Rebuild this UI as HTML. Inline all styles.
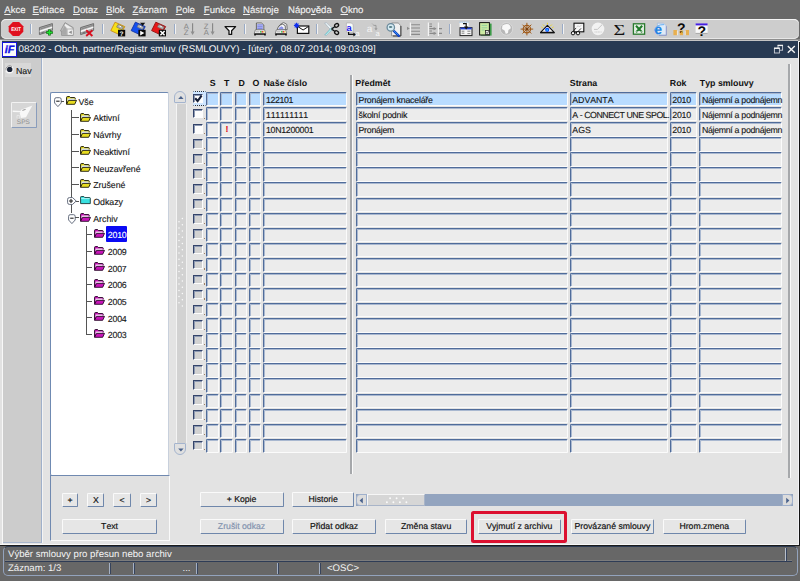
<!DOCTYPE html>
<html lang="cs"><head><meta charset="utf-8"><title>08202 - Obch. partner/Registr smluv</title>
<style>
html,body{margin:0;padding:0;}
body{font-kerning:none;text-rendering:geometricPrecision;width:800px;height:581px;position:relative;overflow:hidden;background:#e3e3e3;font-family:"Liberation Sans",Arial,sans-serif;color:#111;}
.a{position:absolute;}
.t{position:absolute;white-space:nowrap;line-height:1;}
#menu{left:0;top:0;width:800px;height:41px;background:#686868;}
.mi{position:absolute;top:5.9px;font-size:9.6px;-webkit-text-stroke:0.12px currentColor;color:#f2f2f2;white-space:nowrap;line-height:1;}
.mi u{text-decoration:underline;text-underline-offset:1px;}
#tb{left:1px;top:19px;width:797.5px;height:19.5px;background:#cdcdcd;border-radius:5px;box-shadow:inset 0 1px 0 #f4f4f4, inset 0 -1px 0 #e6e6e6;}
.sep{position:absolute;top:23.8px;width:1px;height:10.4px;background:#9aabc6;box-shadow:1px 0 0 #f2f2f2;}
#title{left:1.5px;top:41px;width:796.3px;height:16.6px;background:#283a53;}
#title .tx{left:17px;top:3.6px;font-size:9.75px;color:#f4f4f4;}
#nav{left:3.4px;top:57.7px;width:37.4px;height:484.3px;background:#cccccc;border-right:1px solid #9fb0ca;border-bottom:1px solid #a8b6cc;box-shadow:1px 0 0 #f4f4f4;}
.cell{position:absolute;height:12.4px;background:#ececec;border-top:1px solid #506c9a;border-left:1px solid #506c9a;border-right:1px solid #fbfbfb;border-bottom:1px solid #fbfbfb;box-sizing:content-box;border-radius:1.5px;box-shadow:inset 1px 1px 0 #a9b8d0;}
.cell.sel{background:#b9dcff;}
.ct{position:absolute;font-size:8.8px;-webkit-text-stroke:0.12px currentColor;line-height:1;white-space:nowrap;color:#151515;}
.hd{position:absolute;top:78.6px;font-size:8.8px;font-weight:bold;line-height:1;white-space:nowrap;color:#111;}
.btn{-webkit-text-stroke:0.18px currentColor;position:absolute;height:12.4px;background:#e6e6e6;border-top:1px solid #fafafa;border-left:1px solid #fafafa;border-right:1.2px solid #6f87ab;border-bottom:1.2px solid #6f87ab;border-radius:1.5px;font-size:8.7px;line-height:13.8px;text-align:center;color:#111;white-space:nowrap;}
.cb{position:absolute;width:7.4px;height:7.6px;box-shadow:inset 1px 1px 0 #8e9ab2;border-top:1px solid #34446a;border-left:1px solid #34446a;border-right:1px solid #fdfdfd;border-bottom:1px solid #fdfdfd;background:#d2d2d2;}
.cb.w{background:#fdfdfd;}
.tr{position:absolute;font-size:8.8px;-webkit-text-stroke:0.12px currentColor;line-height:1;white-space:nowrap;color:#151515;}
#status{left:0;top:545px;width:800px;height:36px;background:#676767;}
</style></head><body>
<div id="menu" class="a">
<span class="mi" style="left:4.3px"><u>A</u>kce</span>
<span class="mi" style="left:32.5px"><u>E</u>ditace</span>
<span class="mi" style="left:73px"><u>D</u>otaz</span>
<span class="mi" style="left:106px"><u>B</u>lok</span>
<span class="mi" style="left:132.5px"><u>Z</u>áznam</span>
<span class="mi" style="left:175.75px"><u>P</u>ole</span>
<span class="mi" style="left:203.75px"><u>F</u>unkce</span>
<span class="mi" style="left:243px"><u>N</u>ástroje</span>
<span class="mi" style="left:288px">Nápo<u>v</u>ěda</span>
<span class="mi" style="left:340.5px"><u>O</u>kno</span>
</div>
<div id="tb" class="a"></div>
<div class="sep" style="left:30px"></div>
<div class="sep" style="left:102px"></div>
<div class="sep" style="left:173.75px"></div>
<div class="sep" style="left:244.4px"></div>
<div class="sep" style="left:316.25px"></div>
<div class="sep" style="left:449.4px"></div>
<div class="sep" style="left:562px"></div>
<svg class="a" style="left:0;top:18px" width="800" height="23" viewBox="0 18 800 23">
<path d="M12.9 22 L19.1 22 L23.3 26.2 L23.3 31.8 L19.1 36 L12.9 36 L8.7 31.8 L8.7 26.2 Z" fill="#e0101e"/>
<text x="16" y="30.9" font-size="5.4" font-weight="bold" fill="#fff" text-anchor="middle" font-family="Liberation Sans,Arial,sans-serif" textLength="9.6" lengthAdjust="spacingAndGlyphs">EXIT</text>
<g transform="translate(38.8,0)"><path d="M0.6 27.6 L13.6 23.6 L13.6 30.4 L0.6 34.6 Z" fill="#a9a9a9" stroke="#6e6e6e" stroke-width="1"/><path d="M0.8 30.6 L13.4 26.4 L13.4 28 L0.8 32.2 Z" fill="#f6f6f6"/><path d="M1.6 29 L12.6 25.4" stroke="#7a7a7a" stroke-width="0.8"/><path d="M2.4 33 L5.4 32" stroke="#6a6a6a" stroke-width="0.9"/></g>
<path d="M49.4 29.4 L49.4 35.6 M46.2 32.5 L52.8 32.5" stroke="#0a5a0a" stroke-width="2.6"/><path d="M49.4 29.9 L49.4 35.1 M46.7 32.5 L52.3 32.5" stroke="#20e030" stroke-width="1.5"/>
<g transform="translate(59.6,0)"><path d="M0.8 31 L5.4 22.6 L13.6 27.6 L13.6 35.4 L2 35.4 L2 31 Z" fill="#bdbdbd" stroke="#8e8e8e" stroke-width="0.8"/><path d="M5.6 23.8 L12.8 28.2 L8 28.6 L5 26 Z" fill="#efefef"/><path d="M2.4 31 L5.2 25.6 L7 29.6 L7 34.8 L2.6 34.8 Z" fill="#a8a8a8"/><rect x="8.2" y="29.6" width="5" height="5.2" fill="#f2f2f2"/><path d="M12.2 30.4 L12.2 34 L9 32.2 Z" fill="#8e8e8e"/></g>
<g transform="translate(80,0)"><path d="M0.6 27.6 L13.6 23.6 L13.6 30.4 L0.6 34.6 Z" fill="#a9a9a9" stroke="#6e6e6e" stroke-width="1"/><path d="M0.8 30.6 L13.4 26.4 L13.4 28 L0.8 32.2 Z" fill="#f6f6f6"/><path d="M1.6 29 L12.6 25.4" stroke="#7a7a7a" stroke-width="0.8"/><path d="M2.4 33 L5.4 32" stroke="#6a6a6a" stroke-width="0.9"/></g>
<path d="M86.2 30.2 L92.4 36 M92.4 30.2 L86.2 36" stroke="#d81020" stroke-width="1.9"/>
<g transform="translate(110.4,0)"><path d="M4.6 22.2 L14.4 26.6 L9.8 35 L0.4 30.6 Z" fill="#f6e018" stroke="#c88a18" stroke-width="0.9" stroke-linejoin="round"/><path d="M7.6 24.4 L13 26.9 L11.6 29.6 L6.2 27.1 Z" fill="#b0b0b0" stroke="#6a6a6a" stroke-width="0.6"/><path d="M9 26 L10.6 26.8" stroke="#fff" stroke-width="1"/><rect x="7.6" y="29.8" width="7.2" height="6.6" fill="#0a0a0a"/><text x="11.2" y="35.6" font-size="6.6" font-weight="bold" fill="#fff" text-anchor="middle" font-family="Liberation Sans,Arial,sans-serif">?</text></g>
<g transform="translate(130.8,0)"><path d="M4.6 22.2 L14.4 26.6 L9.8 35 L0.4 30.6 Z" fill="#1450f0" stroke="#1030a0" stroke-width="0.9" stroke-linejoin="round"/><path d="M7.6 24.4 L13 26.9 L11.6 29.6 L6.2 27.1 Z" fill="#b0b0b0" stroke="#6a6a6a" stroke-width="0.6"/><path d="M9 26 L10.6 26.8" stroke="#fff" stroke-width="1"/><rect x="7.6" y="29.8" width="7.2" height="6.6" fill="#0a0a0a"/><path d="M9.4 30.8 L13.6 33.1 L9.4 35.4 Z" fill="#fff"/></g>
<path d="M140 22.8 L145.2 22.8 L142.6 26 Z" fill="#111"/>
<g transform="translate(151.2,0)"><path d="M4.6 22.2 L14.4 26.6 L9.8 35 L0.4 30.6 Z" fill="#e81818" stroke="#901010" stroke-width="0.9" stroke-linejoin="round"/><path d="M7.6 24.4 L13 26.9 L11.6 29.6 L6.2 27.1 Z" fill="#b0b0b0" stroke="#6a6a6a" stroke-width="0.6"/><path d="M9 26 L10.6 26.8" stroke="#fff" stroke-width="1"/><rect x="7.6" y="29.8" width="7.2" height="6.6" fill="#0a0a0a"/><path d="M9.2 31 L13.4 35.2 M13.4 31 L9.2 35.2" stroke="#fff" stroke-width="1.5"/></g>
<text x="183.8" y="28.8" font-size="7.6" fill="#858585" font-family="Liberation Sans,Arial,sans-serif">A</text><text x="183.8" y="35" font-size="7.6" fill="#858585" font-family="Liberation Sans,Arial,sans-serif">Z</text>
<path d="M192.6 23.2 L192.6 33" stroke="#858585" stroke-width="1.1"/><path d="M190.6 31.4 L194.6 31.4 L192.6 35 Z" fill="#8e8e8e"/>
<text x="203.8" y="28.8" font-size="7.6" fill="#858585" font-family="Liberation Sans,Arial,sans-serif">Z</text><text x="203.8" y="35" font-size="7.6" fill="#858585" font-family="Liberation Sans,Arial,sans-serif">A</text>
<path d="M212.6 23.2 L212.6 33" stroke="#858585" stroke-width="1.1"/><path d="M210.6 31.4 L214.6 31.4 L212.6 35 Z" fill="#8e8e8e"/>
<path d="M225 26.6 L235.6 26.6 L231.6 30.8 L231.6 34.4 L229 34.4 L229 30.8 Z" fill="#fff" stroke="#111" stroke-width="1.3" stroke-linejoin="round"/>
<g transform="translate(253.8,0)"><path d="M2.6 30 L2.6 23 L7.6 23 L10 25 L10 30 Z" fill="#fafafa" stroke="#444" stroke-width="0.8"/><rect x="3.4" y="24.2" width="5.6" height="5" fill="#8088e4"/><path d="M3.4 25.6 L9 25.6 M3.4 27.4 L9 27.4" stroke="#c0c4f4" stroke-width="0.6"/><path d="M0.4 33.6 L1.6 29.8 L10.8 29.8 L12 33.6 Z" fill="#f2f2f2" stroke="#666" stroke-width="0.7"/><rect x="6.2" y="31.2" width="1.6" height="1.3" fill="#20c030"/><rect x="7.8" y="31.2" width="1.6" height="1.3" fill="#e02020"/><rect x="9.4" y="31.2" width="1.2" height="1.3" fill="#e8d020"/><path d="M2 31.8 L5.6 31.8" stroke="#999" stroke-width="0.7"/><path d="M0.4 33.6 L12 33.6 L12 35.4 L10.4 35.4 L10.4 34.8 L2 34.8 L2 35.4 L0.4 35.4 Z" fill="#0c0c0c"/></g>
<g transform="translate(274.8,0)"><path d="M3.4 29.6 Q3.6 24 9 22.6 L12 24.4 L12.4 29.6 Z" fill="#f4f4f4" stroke="#555" stroke-width="0.8"/><path d="M2.6 29.8 Q3 25.4 7.8 24.2 L10.4 25.6 L10.6 29.8 Z" fill="#fafafa" stroke="#444" stroke-width="0.8"/><path d="M3.6 29.4 Q4 27 6.8 26.2 L8.6 27.4 L8.6 29.4 Z" fill="#8c94e8"/><path d="M0.4 33.6 L1.6 29.8 L10.8 29.8 L12 33.6 Z" fill="#f2f2f2" stroke="#666" stroke-width="0.7"/><rect x="6.2" y="31.2" width="1.6" height="1.3" fill="#20c030"/><rect x="7.8" y="31.2" width="1.6" height="1.3" fill="#e02020"/><rect x="9.4" y="31.2" width="1.2" height="1.3" fill="#e8d020"/><path d="M2 31.8 L5.6 31.8" stroke="#999" stroke-width="0.7"/><path d="M0.4 33.6 L12 33.6 L12 35.4 L10.4 35.4 L10.4 34.8 L2 34.8 L2 35.4 L0.4 35.4 Z" fill="#0c0c0c"/></g>
<rect x="297.4" y="26" width="11.4" height="7.4" fill="#fff" stroke="#111" stroke-width="1.2"/><path d="M297.6 26.4 L303.1 30 L308.6 26.4" fill="none" stroke="#111" stroke-width="1"/>
<path d="M296.6 22.8 L296.6 28.2 M293.9 25.5 L299.3 25.5 M294.7 23.6 L298.5 27.4 M298.5 23.6 L294.7 27.4" stroke="#1030f0" stroke-width="1.2"/>
<path d="M324.6 23 L326.4 22.8 L333.6 29.6 L331.4 30.6 Z" fill="#f4fcfc" stroke="#9ab" stroke-width="0.6"/><path d="M324.6 35 L326.4 35.2 L333.6 28.4 L331.4 27.4 Z" fill="#d8f4f4" stroke="#7ab" stroke-width="0.6"/><path d="M325.6 34.4 L331.6 28.8" stroke="#58c8d0" stroke-width="0.7"/>
<path d="M331.5 29 L335 26.5 M331.5 29 L335 31.5" stroke="#111" stroke-width="1.3"/><ellipse cx="336.6" cy="25.4" rx="2.1" ry="1.7" fill="none" stroke="#111" stroke-width="1.3" transform="rotate(-35 336.6 25.4)"/><ellipse cx="336.6" cy="32.6" rx="2.1" ry="1.7" fill="none" stroke="#111" stroke-width="1.3" transform="rotate(35 336.6 32.6)"/>
<path d="M346.4 23 L351.4 23 L353.2 24.8 L353.2 32 L346.4 32 Z" fill="#fafafa" stroke="#999" stroke-width="0.5"/>
<text x="346.6" y="31" font-size="9.4" font-weight="bold" fill="#2020f0" font-family="Liberation Sans,Arial,sans-serif">a</text>
<path d="M348.6 32 L348.6 34.4 L354 34.4" fill="none" stroke="#111" stroke-width="1.2"/><path d="M353.4 32.4 L356 34.4 L353.4 36.4 Z" fill="#111"/>
<text x="355.4" y="35.8" font-size="7.4" fill="#fafafa" font-family="Liberation Sans,Arial,sans-serif">a</text>
<text x="366.8" y="31.6" font-size="10" fill="#f4f4f4" font-family="Liberation Sans,Arial,sans-serif">a</text>
<path d="M373.6 25.4 L376 25.4 L376 29" fill="none" stroke="#9a9a9a" stroke-width="1"/><path d="M374.4 28.2 L377.6 28.2 L376 30.4 Z" fill="#9a9a9a"/><path d="M372 23.4 L374.4 25.8" stroke="#aaa" stroke-width="0.8"/>
<text x="375.6" y="36.2" font-size="7.6" fill="#f6f6f6" font-family="Liberation Sans,Arial,sans-serif">a</text>
<path d="M391.6 23 L398.2 23 L400.8 25.6 L400.8 35.8 L391.6 35.8 Z" fill="#f0f0f0" stroke="#777" stroke-width="0.7"/><path d="M400.9 26 L400.9 36 L393 36" stroke="#333" stroke-width="0.9" fill="none"/>
<path d="M394 31.2 L398.8 35.8" stroke="#103cc0" stroke-width="2.4" stroke-linecap="round"/><path d="M394 31 L398.4 35.2" stroke="#30a0ff" stroke-width="0.9"/>
<circle cx="390.8" cy="27.4" r="3.7" fill="#d8ecf4" stroke="#6a8a9c" stroke-width="1.3"/><ellipse cx="390.6" cy="27" rx="1.8" ry="1" fill="#5a8088"/>
<path d="M410.4 22.4 L410.4 36" stroke="#f4f4f4" stroke-width="1.2"/><path d="M411.2 24.8 L420 24.8 M411.2 28 L420 28 M411.2 31.2 L420 31.2 M411.2 34.4 L420 34.4" stroke="#8a8a8a" stroke-width="1.1"/><path d="M407 26.8 L409.8 28.4 L407 30 Z" fill="#8e8e8e"/>
<path d="M428.4 22.4 L428.4 36 M438.4 22.4 L438.4 36" stroke="#f4f4f4" stroke-width="1.2"/><path d="M429.4 24 L432 24 M429.4 26.4 L432 26.4 M429.4 28.6 L436 28.6 M429.4 31 L432 31 M429.4 33.4 L436 33.4 M439 28.6 L442 28.6 M439 33.4 L442 33.4" stroke="#8a8a8a" stroke-width="1.1"/><path d="M433.6 27 L436.6 28.6 L433.6 30.2 Z M433.6 31.8 L436.6 33.4 L433.6 35 Z" fill="#8e8e8e"/>
<rect x="459.6" y="22.4" width="9" height="6" fill="#fafafa"/><path d="M459.4 22.2 L468.8 22.2" stroke="#8cc0f0" stroke-width="0.8" stroke-dasharray="1.4 0.8"/>
<rect x="460" y="27.6" width="12" height="8" fill="#f4f4f4" stroke="#222" stroke-width="1"/><rect x="460.4" y="27.6" width="11.2" height="1.8" fill="#2040d0"/>
<path d="M463 23.6 L466.2 23.6 L466.2 27" fill="none" stroke="#111" stroke-width="1.2"/><path d="M464 26.4 L468.4 26.4 L466.2 29.6 Z" fill="#111"/>
<path d="M461.6 31.2 L464.4 31.2 M461.6 33.2 L464.4 33.2 M467.4 31.2 L470.4 31.2 M467.4 33.6 L470.4 33.6" stroke="#777" stroke-width="0.9"/>
<rect x="481" y="23.6" width="10.6" height="12" fill="#3c9a48"/><rect x="479.6" y="22.6" width="9.8" height="12.4" fill="#cdeaa4" stroke="#111" stroke-width="1"/>
<path d="M481.6 25.4 L487.2 25.4 M481.6 27.8 L487.2 27.8 M481.6 30 L484.6 30" stroke="#8ccf9c" stroke-width="0.9"/><rect x="485.4" y="30.4" width="4" height="4" fill="#e8e8e8" stroke="#222" stroke-width="0.8"/><path d="M486.4 32.4 L487.2 33.4 L488.8 31.2" stroke="#222" stroke-width="0.7" fill="none"/>
<circle cx="506.4" cy="28.9" r="6.3" fill="#b8b8b8"/><path d="M502.4 25.6 Q505 23.4 508.6 24.2 Q511.2 26 510.6 28.4 L508.4 30 L508 33 L505.8 34 L504.6 30.6 L502 29 Z" fill="#f8f8f8"/><circle cx="506.4" cy="28.9" r="6.3" fill="none" stroke="#dedede" stroke-width="0.8"/>
<g stroke="#a05a18" fill="none"><circle cx="526.9" cy="29.1" r="3.7" stroke-width="1.2"/><path d="M520.6 29.1 L533.2 29.1 M526.9 22.8 L526.9 35.4 M522.5 24.7 L531.3 33.5 M531.3 24.7 L522.5 33.5" stroke-width="1"/></g><circle cx="526.9" cy="29.1" r="1.3" fill="#7a4010"/>
<path d="M543 24.6 L544.4 26 M547.4 22.8 L547.4 24.4 M551.8 24.6 L550.4 26 M553.6 27 L552.2 27.8 M541.4 27 L542.8 27.8" stroke="#f0d820" stroke-width="1"/>
<path d="M547.4 25.4 L554.2 32.4 L540.6 32.4 Z" fill="#f4f4f4" stroke="#111" stroke-width="1.1" stroke-linejoin="round"/><path d="M540.2 32.7 L554.6 32.7" stroke="#111" stroke-width="1.4"/><circle cx="547.2" cy="29.8" r="2.1" fill="#1040ff"/><circle cx="547.2" cy="30" r="0.9" fill="#20d0ff"/>
<rect x="574" y="23.2" width="9.8" height="8.6" fill="#f6f6f6" stroke="#111" stroke-width="1.1"/><path d="M576.6 27.4 L578 25.6 L579.4 27 L581.6 24.8" stroke="#bbb" stroke-width="0.7" fill="none"/>
<circle cx="573" cy="33.2" r="1.7" fill="#f4f4f4" stroke="#111" stroke-width="1"/><circle cx="578" cy="33.2" r="1.7" fill="#f4f4f4" stroke="#111" stroke-width="1"/><path d="M574.7 32.8 L576.3 32.8 M573 31.5 L576 28 M578 31.5 L581 28.4" stroke="#111" stroke-width="0.8"/>
<circle cx="598" cy="28.9" r="6.3" fill="#f2f2f2"/><path d="M594 29.4 L597.4 29.4 L602 24.8" stroke="#c4c4c4" stroke-width="1" fill="none"/><path d="M594.6 32 L601.6 32" stroke="#c8c8c8" stroke-width="1.2" stroke-dasharray="1 0.6"/>
<text x="613.4" y="34.8" font-size="15.4" fill="#111" font-family="Liberation Serif,Times New Roman,serif" textLength="11.8" lengthAdjust="spacingAndGlyphs">Σ</text>
<rect x="633.4" y="23.8" width="11.2" height="10.4" fill="#e4efe4" stroke="#2a7a2e" stroke-width="1.3"/><path d="M636 25.8 L642.2 32.4 M642.2 25.8 L636 32.4" stroke="#1e7a28" stroke-width="2"/><path d="M635 31.8 L643.6 31.8" stroke="#f4f4f4" stroke-width="0.7"/>
<path d="M657.4 23.2 L663.6 23.2 L666.2 25.8 L666.2 35 L657.4 35 Z" fill="#dfeaf8" stroke="#9fb8dc" stroke-width="0.7"/><path d="M666.4 26.2 L666.4 35.4 L659 35.4" stroke="#8a94c8" stroke-width="0.8" fill="none"/>
<text x="654.2" y="34" font-size="14" font-weight="bold" fill="#2484e4" font-family="Liberation Sans,Arial,sans-serif">e</text><path d="M654.4 30.6 Q656 24.4 664 24.6" stroke="#58a8f0" stroke-width="0.9" fill="none"/>
<rect x="673.4" y="30" width="3.6" height="5.2" fill="#e8b050"/><rect x="679.8" y="30.4" width="3.2" height="4.8" fill="#e8b050"/><rect x="685.6" y="30" width="3.4" height="5.2" fill="#e8b050"/><path d="M677.4 30.6 L677.4 35.2 M685.2 30.6 L685.2 35.2" stroke="#f8f0e0" stroke-width="0.8"/>
<text x="681.4" y="33.2" font-size="14" font-weight="bold" fill="#0a0a0a" text-anchor="middle" font-family="Liberation Sans,Arial,sans-serif">?</text><rect x="680.6" y="31.6" width="1.6" height="1.6" fill="#e0a020"/>
<rect x="695.6" y="23.6" width="12" height="9.6" fill="#f8f8f8"/><rect x="695.6" y="23.4" width="12" height="2" fill="#4420e0"/><path d="M695.6 33.4 L707.6 33.4" stroke="#888" stroke-width="0.6"/>
<text x="701.8" y="35.8" font-size="14" font-weight="bold" fill="#0a0a0a" text-anchor="middle" font-family="Liberation Sans,Arial,sans-serif">?</text>
</svg>
<div class="a" style="left:0;top:39px;width:800px;height:2px;background:#8e8e8e"></div><div class="a" style="left:0;top:39.8px;width:798px;height:0.8px;background:#c4c4c4"></div>
<div id="title" class="a"><div class="a" style="left:0.7px;top:1.2px;width:12.6px;height:12.6px;background:#fbfbfb;border:1px solid #1414dc;"></div><svg class="a" style="left:0.5px;top:1px" width="15" height="15" viewBox="0 0 15 15"><text x="7.6" y="11.4" font-size="10.5" font-weight="bold" font-style="italic" fill="#1010e8" stroke="#1010e8" stroke-width="0.35" text-anchor="middle" font-family="Liberation Sans,Arial,sans-serif" textLength="9.6" lengthAdjust="spacingAndGlyphs">iF</text></svg><span class="t tx">08202 - Obch. partner/Registr smluv (RSMLOUVY) - [úterý , 08.07.2014; 09:03:09]</span></div>
<svg class="a" style="left:770px;top:41px" width="28" height="17" viewBox="770 41 28 17"><rect x="778" y="45.6" width="4.6" height="4.6" fill="none" stroke="#cfd3da" stroke-width="0.9"/><path d="M777.6 45.4 L783 45.4" stroke="#f2f2f2" stroke-width="1.3"/><rect x="774.4" y="48.4" width="5" height="4.6" fill="#283a53" stroke="#cfd3da" stroke-width="0.9"/><path d="M774 48.2 L779.8 48.2" stroke="#f6f6f6" stroke-width="1.4"/><path d="M787.8 46.1 L794.8 52.7 M794.8 46.1 L787.8 52.7" stroke="#f6f6f6" stroke-width="1.4"/></svg>
<div id="nav" class="a"></div>
<div class="a" style="left:5px;top:63px;width:26px;height:14px;background:#d8d8d8;"></div>
<svg class="a" style="left:4px;top:64px" width="11" height="11" viewBox="0 0 11 11"><circle cx="5.5" cy="5.5" r="4.1" fill="#f6f6f6"/><path d="M2 6.4 A3.7 3.7 0 0 1 8 2.6" fill="none" stroke="#8a8a8a" stroke-width="0.9"/><circle cx="5.7" cy="5.4" r="2.7" fill="#1c2436"/></svg>
<span class="t" style="left:16px;top:66.6px;font-size:8.8px;-webkit-text-stroke:0.12px currentColor;color:#151515">Nav</span>
<div class="a" style="left:11px;top:102px;width:23.6px;height:23.6px;background:#d6d6d6;border-top:1px solid #f2f2f2;border-left:1px solid #f2f2f2;border-right:1px solid #8a9dbc;border-bottom:1px solid #8a9dbc;border-radius:1.5px;"></div>
<svg class="a" style="left:11px;top:102px" width="26" height="26" viewBox="11 102 26 26"><path d="M12.7 110.6 L21 110.9 L21 112.2 L12.7 111.9 Z" fill="#f8f8f8"/><path d="M21 109.8 L32.4 105.4 L26 117.2 L20.9 118 L19.8 113.2 Z" fill="#f8f8f8"/><path d="M22.4 110.4 L25.6 109.4" stroke="#7a7a7a" stroke-width="0.8"/><path d="M17 118.4 L17 115.4 L19.6 115.4 L19.6 118.4" fill="none" stroke="#e8e8e8" stroke-width="0.9"/></svg>
<span class="t" style="left:16.8px;top:119.9px;font-size:6.5px;color:#8e8e8e;">SPS</span>
<div class="a" style="left:49.5px;top:92px;width:117.5px;height:381.5px;background:#fff;border:1px solid #6f8ab2;border-right-color:#c8d0dc;border-bottom-color:#6f8ab2;border-radius:2px;"></div>
<div class="a" style="left:71.40px;top:109.60px;width:1.10px;height:103.72px;background:#555"></div>
<div class="a" style="left:85.80px;top:226.30px;width:1.10px;height:108.75px;background:#555"></div>
<svg class="a" style="left:53.60px;top:96.70px" width="8" height="11" viewBox="0 0 8 11"><path d="M0.6 2.4 Q0.6 0.7 2.2 0.7 L5.6 0.7 Q7.2 0.7 7.2 2.4 L7.2 6 L3.9 9.6 L0.6 6 Z" fill="#fff" stroke="#555e70" stroke-width="0.9"/><path d="M2.2 4.2 L5.6 4.2" stroke="#222" stroke-width="1.1"/></svg>
<div class="a" style="left:61.00px;top:100.60px;width:3.40px;height:1.10px;background:#555"></div>
<svg class="a" style="left:65.50px;top:96.10px" width="11" height="9" viewBox="0 0 11 9"><path d="M0.6 8.2 L0.6 1.4 Q0.6 0.6 1.4 0.6 L3.6 0.6 L4.6 1.6 L8.6 1.6 Q9.2 1.6 9.2 2.4 L9.2 3.4" fill="#e8dc20" stroke="#1c1a08" stroke-width="1"/><path d="M1.5 2.5 L8.6 2.5 L8.6 5.2 L1.5 5.2 Z" fill="#dfe8f8"/><path d="M0.6 8.3 L2.5 4.4 L10.5 4.4 L8.7 8.3 Z" fill="#e8dc20" stroke="#1c1a08" stroke-width="0.9" stroke-linejoin="round"/></svg>
<span class="tr" style="left:78.4px;top:97.80px;color:#151515">Vše</span>
<div class="a" style="left:71.90px;top:117.27px;width:6.80px;height:1.10px;background:#555"></div>
<svg class="a" style="left:80.20px;top:112.77px" width="11" height="9" viewBox="0 0 11 9"><path d="M0.6 8.2 L0.6 1.4 Q0.6 0.6 1.4 0.6 L3.6 0.6 L4.6 1.6 L8.6 1.6 Q9.2 1.6 9.2 2.4 L9.2 3.4" fill="#e8dc20" stroke="#1c1a08" stroke-width="1"/><path d="M1.5 2.5 L8.6 2.5 L8.6 5.2 L1.5 5.2 Z" fill="#dfe8f8"/><path d="M0.6 8.3 L2.5 4.4 L10.5 4.4 L8.7 8.3 Z" fill="#e8dc20" stroke="#1c1a08" stroke-width="0.9" stroke-linejoin="round"/></svg>
<span class="tr" style="left:93.2px;top:114.47px;color:#151515">Aktivní</span>
<div class="a" style="left:71.90px;top:133.95px;width:6.80px;height:1.10px;background:#555"></div>
<svg class="a" style="left:80.20px;top:129.45px" width="11" height="9" viewBox="0 0 11 9"><path d="M0.6 8.2 L0.6 1.4 Q0.6 0.6 1.4 0.6 L3.6 0.6 L4.6 1.6 L8.6 1.6 Q9.2 1.6 9.2 2.4 L9.2 3.4" fill="#e8dc20" stroke="#1c1a08" stroke-width="1"/><path d="M1.5 2.5 L8.6 2.5 L8.6 5.2 L1.5 5.2 Z" fill="#dfe8f8"/><path d="M0.6 8.3 L2.5 4.4 L10.5 4.4 L8.7 8.3 Z" fill="#e8dc20" stroke="#1c1a08" stroke-width="0.9" stroke-linejoin="round"/></svg>
<span class="tr" style="left:93.2px;top:131.15px;color:#151515">Návrhy</span>
<div class="a" style="left:71.90px;top:150.62px;width:6.80px;height:1.10px;background:#555"></div>
<svg class="a" style="left:80.20px;top:146.12px" width="11" height="9" viewBox="0 0 11 9"><path d="M0.6 8.2 L0.6 1.4 Q0.6 0.6 1.4 0.6 L3.6 0.6 L4.6 1.6 L8.6 1.6 Q9.2 1.6 9.2 2.4 L9.2 3.4" fill="#e8dc20" stroke="#1c1a08" stroke-width="1"/><path d="M1.5 2.5 L8.6 2.5 L8.6 5.2 L1.5 5.2 Z" fill="#dfe8f8"/><path d="M0.6 8.3 L2.5 4.4 L10.5 4.4 L8.7 8.3 Z" fill="#e8dc20" stroke="#1c1a08" stroke-width="0.9" stroke-linejoin="round"/></svg>
<span class="tr" style="left:93.2px;top:147.82px;color:#151515">Neaktivní</span>
<div class="a" style="left:71.90px;top:167.30px;width:6.80px;height:1.10px;background:#555"></div>
<svg class="a" style="left:80.20px;top:162.80px" width="11" height="9" viewBox="0 0 11 9"><path d="M0.6 8.2 L0.6 1.4 Q0.6 0.6 1.4 0.6 L3.6 0.6 L4.6 1.6 L8.6 1.6 Q9.2 1.6 9.2 2.4 L9.2 3.4" fill="#e8dc20" stroke="#1c1a08" stroke-width="1"/><path d="M1.5 2.5 L8.6 2.5 L8.6 5.2 L1.5 5.2 Z" fill="#dfe8f8"/><path d="M0.6 8.3 L2.5 4.4 L10.5 4.4 L8.7 8.3 Z" fill="#e8dc20" stroke="#1c1a08" stroke-width="0.9" stroke-linejoin="round"/></svg>
<span class="tr" style="left:93.2px;top:164.50px;color:#151515">Neuzavřené</span>
<div class="a" style="left:71.90px;top:183.97px;width:6.80px;height:1.10px;background:#555"></div>
<svg class="a" style="left:80.20px;top:179.47px" width="11" height="9" viewBox="0 0 11 9"><path d="M0.6 8.2 L0.6 1.4 Q0.6 0.6 1.4 0.6 L3.6 0.6 L4.6 1.6 L8.6 1.6 Q9.2 1.6 9.2 2.4 L9.2 3.4" fill="#e8dc20" stroke="#1c1a08" stroke-width="1"/><path d="M1.5 2.5 L8.6 2.5 L8.6 5.2 L1.5 5.2 Z" fill="#dfe8f8"/><path d="M0.6 8.3 L2.5 4.4 L10.5 4.4 L8.7 8.3 Z" fill="#e8dc20" stroke="#1c1a08" stroke-width="0.9" stroke-linejoin="round"/></svg>
<span class="tr" style="left:93.2px;top:181.17px;color:#151515">Zrušené</span>
<svg class="a" style="left:67.10px;top:197.15px" width="10" height="8" viewBox="0 0 10 8"><path d="M2.4 0.6 L5.6 0.6 L9.2 4 L5.6 7.4 L2.4 7.4 Q0.6 7.4 0.6 5.6 L0.6 2.4 Q0.6 0.6 2.4 0.6 Z" fill="#fff" stroke="#555e70" stroke-width="0.9"/><path d="M2 4 L6 4 M4 2 L4 6" stroke="#222" stroke-width="1.1"/></svg>
<div class="a" style="left:76.00px;top:200.65px;width:3.00px;height:1.10px;background:#555"></div>
<svg class="a" style="left:79.50px;top:196.15px" width="11" height="9" viewBox="0 0 11 9"><path d="M0.6 7.6 L0.6 1.2 Q0.6 0.5 1.3 0.5 L3.8 0.5 L4.8 1.6 L9.6 1.6 Q10.3 1.6 10.3 2.3 L10.3 7.6 Z" fill="#38e0e0" stroke="#183838" stroke-width="0.9"/><path d="M1.2 2.6 L9.6 2.6" stroke="#c8ffff" stroke-width="0.8"/></svg>
<span class="tr" style="left:93.2px;top:197.85px;color:#151515">Odkazy</span>
<svg class="a" style="left:67.80px;top:213.62px" width="8" height="11" viewBox="0 0 8 11"><path d="M0.6 2.4 Q0.6 0.7 2.2 0.7 L5.6 0.7 Q7.2 0.7 7.2 2.4 L7.2 6 L3.9 9.6 L0.6 6 Z" fill="#fff" stroke="#555e70" stroke-width="0.9"/><path d="M2.2 4.2 L5.6 4.2" stroke="#222" stroke-width="1.1"/></svg>
<div class="a" style="left:75.40px;top:217.32px;width:4.00px;height:1.10px;background:#555"></div>
<svg class="a" style="left:80.00px;top:212.62px" width="11" height="9" viewBox="0 0 11 9"><path d="M0.6 8.2 L0.6 1.4 Q0.6 0.6 1.4 0.6 L3.6 0.6 L4.6 1.6 L8.6 1.6 Q9.2 1.6 9.2 2.4 L9.2 3.4" fill="#c814b8" stroke="#280828" stroke-width="1"/><path d="M1.5 2.5 L8.6 2.5 L8.6 5.2 L1.5 5.2 Z" fill="#f4d8f4"/><path d="M0.6 8.3 L2.5 4.4 L10.5 4.4 L8.7 8.3 Z" fill="#c814b8" stroke="#280828" stroke-width="0.9" stroke-linejoin="round"/></svg>
<span class="tr" style="left:93.2px;top:214.52px;color:#151515">Archiv</span>
<div class="a" style="left:86.30px;top:234.00px;width:6.20px;height:1.10px;background:#555"></div>
<svg class="a" style="left:94.30px;top:228.90px" width="11" height="9" viewBox="0 0 11 9"><path d="M0.6 8.2 L0.6 1.4 Q0.6 0.6 1.4 0.6 L3.6 0.6 L4.6 1.6 L8.6 1.6 Q9.2 1.6 9.2 2.4 L9.2 3.4" fill="#c814b8" stroke="#280828" stroke-width="1"/><path d="M1.5 2.5 L8.6 2.5 L8.6 5.2 L1.5 5.2 Z" fill="#f4d8f4"/><path d="M0.6 8.3 L2.5 4.4 L10.5 4.4 L8.7 8.3 Z" fill="#c814b8" stroke="#280828" stroke-width="0.9" stroke-linejoin="round"/></svg>
<div class="a" style="left:106px;top:226.30px;width:20.8px;height:15.8px;background:#0a0af4;border-radius:1px"></div>
<span class="tr" style="left:107.8px;top:231.20px;color:#fff;letter-spacing:-0.2px">2010</span>
<div class="a" style="left:86.30px;top:250.68px;width:6.20px;height:1.10px;background:#555"></div>
<svg class="a" style="left:94.30px;top:245.58px" width="11" height="9" viewBox="0 0 11 9"><path d="M0.6 8.2 L0.6 1.4 Q0.6 0.6 1.4 0.6 L3.6 0.6 L4.6 1.6 L8.6 1.6 Q9.2 1.6 9.2 2.4 L9.2 3.4" fill="#c814b8" stroke="#280828" stroke-width="1"/><path d="M1.5 2.5 L8.6 2.5 L8.6 5.2 L1.5 5.2 Z" fill="#f4d8f4"/><path d="M0.6 8.3 L2.5 4.4 L10.5 4.4 L8.7 8.3 Z" fill="#c814b8" stroke="#280828" stroke-width="0.9" stroke-linejoin="round"/></svg>
<span class="tr" style="left:107.8px;top:247.88px;color:#151515;letter-spacing:-0.2px">2009</span>
<div class="a" style="left:86.30px;top:267.35px;width:6.20px;height:1.10px;background:#555"></div>
<svg class="a" style="left:94.30px;top:262.25px" width="11" height="9" viewBox="0 0 11 9"><path d="M0.6 8.2 L0.6 1.4 Q0.6 0.6 1.4 0.6 L3.6 0.6 L4.6 1.6 L8.6 1.6 Q9.2 1.6 9.2 2.4 L9.2 3.4" fill="#c814b8" stroke="#280828" stroke-width="1"/><path d="M1.5 2.5 L8.6 2.5 L8.6 5.2 L1.5 5.2 Z" fill="#f4d8f4"/><path d="M0.6 8.3 L2.5 4.4 L10.5 4.4 L8.7 8.3 Z" fill="#c814b8" stroke="#280828" stroke-width="0.9" stroke-linejoin="round"/></svg>
<span class="tr" style="left:107.8px;top:264.55px;color:#151515;letter-spacing:-0.2px">2007</span>
<div class="a" style="left:86.30px;top:284.02px;width:6.20px;height:1.10px;background:#555"></div>
<svg class="a" style="left:94.30px;top:278.92px" width="11" height="9" viewBox="0 0 11 9"><path d="M0.6 8.2 L0.6 1.4 Q0.6 0.6 1.4 0.6 L3.6 0.6 L4.6 1.6 L8.6 1.6 Q9.2 1.6 9.2 2.4 L9.2 3.4" fill="#c814b8" stroke="#280828" stroke-width="1"/><path d="M1.5 2.5 L8.6 2.5 L8.6 5.2 L1.5 5.2 Z" fill="#f4d8f4"/><path d="M0.6 8.3 L2.5 4.4 L10.5 4.4 L8.7 8.3 Z" fill="#c814b8" stroke="#280828" stroke-width="0.9" stroke-linejoin="round"/></svg>
<span class="tr" style="left:107.8px;top:281.22px;color:#151515;letter-spacing:-0.2px">2006</span>
<div class="a" style="left:86.30px;top:300.70px;width:6.20px;height:1.10px;background:#555"></div>
<svg class="a" style="left:94.30px;top:295.60px" width="11" height="9" viewBox="0 0 11 9"><path d="M0.6 8.2 L0.6 1.4 Q0.6 0.6 1.4 0.6 L3.6 0.6 L4.6 1.6 L8.6 1.6 Q9.2 1.6 9.2 2.4 L9.2 3.4" fill="#c814b8" stroke="#280828" stroke-width="1"/><path d="M1.5 2.5 L8.6 2.5 L8.6 5.2 L1.5 5.2 Z" fill="#f4d8f4"/><path d="M0.6 8.3 L2.5 4.4 L10.5 4.4 L8.7 8.3 Z" fill="#c814b8" stroke="#280828" stroke-width="0.9" stroke-linejoin="round"/></svg>
<span class="tr" style="left:107.8px;top:297.90px;color:#151515;letter-spacing:-0.2px">2005</span>
<div class="a" style="left:86.30px;top:317.38px;width:6.20px;height:1.10px;background:#555"></div>
<svg class="a" style="left:94.30px;top:312.27px" width="11" height="9" viewBox="0 0 11 9"><path d="M0.6 8.2 L0.6 1.4 Q0.6 0.6 1.4 0.6 L3.6 0.6 L4.6 1.6 L8.6 1.6 Q9.2 1.6 9.2 2.4 L9.2 3.4" fill="#c814b8" stroke="#280828" stroke-width="1"/><path d="M1.5 2.5 L8.6 2.5 L8.6 5.2 L1.5 5.2 Z" fill="#f4d8f4"/><path d="M0.6 8.3 L2.5 4.4 L10.5 4.4 L8.7 8.3 Z" fill="#c814b8" stroke="#280828" stroke-width="0.9" stroke-linejoin="round"/></svg>
<span class="tr" style="left:107.8px;top:314.57px;color:#151515;letter-spacing:-0.2px">2004</span>
<div class="a" style="left:86.30px;top:334.05px;width:6.20px;height:1.10px;background:#555"></div>
<svg class="a" style="left:94.30px;top:328.95px" width="11" height="9" viewBox="0 0 11 9"><path d="M0.6 8.2 L0.6 1.4 Q0.6 0.6 1.4 0.6 L3.6 0.6 L4.6 1.6 L8.6 1.6 Q9.2 1.6 9.2 2.4 L9.2 3.4" fill="#c814b8" stroke="#280828" stroke-width="1"/><path d="M1.5 2.5 L8.6 2.5 L8.6 5.2 L1.5 5.2 Z" fill="#f4d8f4"/><path d="M0.6 8.3 L2.5 4.4 L10.5 4.4 L8.7 8.3 Z" fill="#c814b8" stroke="#280828" stroke-width="0.9" stroke-linejoin="round"/></svg>
<span class="tr" style="left:107.8px;top:331.25px;color:#151515;letter-spacing:-0.2px">2003</span>
<div class="cell sel" style="left:206.00px;top:92.00px;width:10.55px"></div>
<div class="cell sel" style="left:220.40px;top:92.00px;width:10.40px"></div>
<div class="cell sel" style="left:234.75px;top:92.00px;width:10.10px"></div>
<div class="cell sel" style="left:249.00px;top:92.00px;width:10.30px"></div>
<div class="cell sel" style="left:263.00px;top:92.00px;width:82.30px"></div>
<div class="cell sel" style="left:356.00px;top:92.00px;width:209.80px"></div>
<div class="cell sel" style="left:570.25px;top:92.00px;width:96.05px"></div>
<div class="cell sel" style="left:670.25px;top:92.00px;width:24.55px"></div>
<div class="cell sel" style="left:699.40px;top:92.00px;width:80.90px"></div>
<div class="cb w" style="left:193.2px;top:93.80px"></div>
<div class="a" style="left:204.3px;top:102.50px;width:1px;height:1.2px;background:#a08060"></div>
<div class="cell" style="left:206.00px;top:107.08px;width:10.55px"></div>
<div class="cell" style="left:220.40px;top:107.08px;width:10.40px"></div>
<div class="cell" style="left:234.75px;top:107.08px;width:10.10px"></div>
<div class="cell" style="left:249.00px;top:107.08px;width:10.30px"></div>
<div class="cell" style="left:263.00px;top:107.08px;width:82.30px"></div>
<div class="cell" style="left:356.00px;top:107.08px;width:209.80px"></div>
<div class="cell" style="left:570.25px;top:107.08px;width:96.05px"></div>
<div class="cell" style="left:670.25px;top:107.08px;width:24.55px"></div>
<div class="cell" style="left:699.40px;top:107.08px;width:80.90px"></div>
<div class="cb w" style="left:193.2px;top:108.88px"></div>
<div class="a" style="left:204.3px;top:117.58px;width:1px;height:1.2px;background:#a08060"></div>
<div class="cell" style="left:206.00px;top:122.15px;width:10.55px"></div>
<div class="cell" style="left:220.40px;top:122.15px;width:10.40px"></div>
<div class="cell" style="left:234.75px;top:122.15px;width:10.10px"></div>
<div class="cell" style="left:249.00px;top:122.15px;width:10.30px"></div>
<div class="cell" style="left:263.00px;top:122.15px;width:82.30px"></div>
<div class="cell" style="left:356.00px;top:122.15px;width:209.80px"></div>
<div class="cell" style="left:570.25px;top:122.15px;width:96.05px"></div>
<div class="cell" style="left:670.25px;top:122.15px;width:24.55px"></div>
<div class="cell" style="left:699.40px;top:122.15px;width:80.90px"></div>
<div class="cb w" style="left:193.2px;top:123.95px"></div>
<div class="a" style="left:204.3px;top:132.65px;width:1px;height:1.2px;background:#a08060"></div>
<div class="cell" style="left:206.00px;top:137.23px;width:10.55px"></div>
<div class="cell" style="left:220.40px;top:137.23px;width:10.40px"></div>
<div class="cell" style="left:234.75px;top:137.23px;width:10.10px"></div>
<div class="cell" style="left:249.00px;top:137.23px;width:10.30px"></div>
<div class="cell" style="left:263.00px;top:137.23px;width:82.30px"></div>
<div class="cell" style="left:356.00px;top:137.23px;width:209.80px"></div>
<div class="cell" style="left:570.25px;top:137.23px;width:96.05px"></div>
<div class="cell" style="left:670.25px;top:137.23px;width:24.55px"></div>
<div class="cell" style="left:699.40px;top:137.23px;width:80.90px"></div>
<div class="cb" style="left:193.2px;top:139.03px"></div>
<div class="a" style="left:204.3px;top:147.73px;width:1px;height:1.2px;background:#a08060"></div>
<div class="cell" style="left:206.00px;top:152.30px;width:10.55px"></div>
<div class="cell" style="left:220.40px;top:152.30px;width:10.40px"></div>
<div class="cell" style="left:234.75px;top:152.30px;width:10.10px"></div>
<div class="cell" style="left:249.00px;top:152.30px;width:10.30px"></div>
<div class="cell" style="left:263.00px;top:152.30px;width:82.30px"></div>
<div class="cell" style="left:356.00px;top:152.30px;width:209.80px"></div>
<div class="cell" style="left:570.25px;top:152.30px;width:96.05px"></div>
<div class="cell" style="left:670.25px;top:152.30px;width:24.55px"></div>
<div class="cell" style="left:699.40px;top:152.30px;width:80.90px"></div>
<div class="cb" style="left:193.2px;top:154.10px"></div>
<div class="a" style="left:204.3px;top:162.80px;width:1px;height:1.2px;background:#a08060"></div>
<div class="cell" style="left:206.00px;top:167.38px;width:10.55px"></div>
<div class="cell" style="left:220.40px;top:167.38px;width:10.40px"></div>
<div class="cell" style="left:234.75px;top:167.38px;width:10.10px"></div>
<div class="cell" style="left:249.00px;top:167.38px;width:10.30px"></div>
<div class="cell" style="left:263.00px;top:167.38px;width:82.30px"></div>
<div class="cell" style="left:356.00px;top:167.38px;width:209.80px"></div>
<div class="cell" style="left:570.25px;top:167.38px;width:96.05px"></div>
<div class="cell" style="left:670.25px;top:167.38px;width:24.55px"></div>
<div class="cell" style="left:699.40px;top:167.38px;width:80.90px"></div>
<div class="cb" style="left:193.2px;top:169.18px"></div>
<div class="a" style="left:204.3px;top:177.88px;width:1px;height:1.2px;background:#a08060"></div>
<div class="cell" style="left:206.00px;top:182.46px;width:10.55px"></div>
<div class="cell" style="left:220.40px;top:182.46px;width:10.40px"></div>
<div class="cell" style="left:234.75px;top:182.46px;width:10.10px"></div>
<div class="cell" style="left:249.00px;top:182.46px;width:10.30px"></div>
<div class="cell" style="left:263.00px;top:182.46px;width:82.30px"></div>
<div class="cell" style="left:356.00px;top:182.46px;width:209.80px"></div>
<div class="cell" style="left:570.25px;top:182.46px;width:96.05px"></div>
<div class="cell" style="left:670.25px;top:182.46px;width:24.55px"></div>
<div class="cell" style="left:699.40px;top:182.46px;width:80.90px"></div>
<div class="cb" style="left:193.2px;top:184.26px"></div>
<div class="a" style="left:204.3px;top:192.96px;width:1px;height:1.2px;background:#a08060"></div>
<div class="cell" style="left:206.00px;top:197.53px;width:10.55px"></div>
<div class="cell" style="left:220.40px;top:197.53px;width:10.40px"></div>
<div class="cell" style="left:234.75px;top:197.53px;width:10.10px"></div>
<div class="cell" style="left:249.00px;top:197.53px;width:10.30px"></div>
<div class="cell" style="left:263.00px;top:197.53px;width:82.30px"></div>
<div class="cell" style="left:356.00px;top:197.53px;width:209.80px"></div>
<div class="cell" style="left:570.25px;top:197.53px;width:96.05px"></div>
<div class="cell" style="left:670.25px;top:197.53px;width:24.55px"></div>
<div class="cell" style="left:699.40px;top:197.53px;width:80.90px"></div>
<div class="cb" style="left:193.2px;top:199.33px"></div>
<div class="a" style="left:204.3px;top:208.03px;width:1px;height:1.2px;background:#a08060"></div>
<div class="cell" style="left:206.00px;top:212.61px;width:10.55px"></div>
<div class="cell" style="left:220.40px;top:212.61px;width:10.40px"></div>
<div class="cell" style="left:234.75px;top:212.61px;width:10.10px"></div>
<div class="cell" style="left:249.00px;top:212.61px;width:10.30px"></div>
<div class="cell" style="left:263.00px;top:212.61px;width:82.30px"></div>
<div class="cell" style="left:356.00px;top:212.61px;width:209.80px"></div>
<div class="cell" style="left:570.25px;top:212.61px;width:96.05px"></div>
<div class="cell" style="left:670.25px;top:212.61px;width:24.55px"></div>
<div class="cell" style="left:699.40px;top:212.61px;width:80.90px"></div>
<div class="cb" style="left:193.2px;top:214.41px"></div>
<div class="a" style="left:204.3px;top:223.11px;width:1px;height:1.2px;background:#a08060"></div>
<div class="cell" style="left:206.00px;top:227.68px;width:10.55px"></div>
<div class="cell" style="left:220.40px;top:227.68px;width:10.40px"></div>
<div class="cell" style="left:234.75px;top:227.68px;width:10.10px"></div>
<div class="cell" style="left:249.00px;top:227.68px;width:10.30px"></div>
<div class="cell" style="left:263.00px;top:227.68px;width:82.30px"></div>
<div class="cell" style="left:356.00px;top:227.68px;width:209.80px"></div>
<div class="cell" style="left:570.25px;top:227.68px;width:96.05px"></div>
<div class="cell" style="left:670.25px;top:227.68px;width:24.55px"></div>
<div class="cell" style="left:699.40px;top:227.68px;width:80.90px"></div>
<div class="cb" style="left:193.2px;top:229.48px"></div>
<div class="a" style="left:204.3px;top:238.18px;width:1px;height:1.2px;background:#a08060"></div>
<div class="cell" style="left:206.00px;top:242.76px;width:10.55px"></div>
<div class="cell" style="left:220.40px;top:242.76px;width:10.40px"></div>
<div class="cell" style="left:234.75px;top:242.76px;width:10.10px"></div>
<div class="cell" style="left:249.00px;top:242.76px;width:10.30px"></div>
<div class="cell" style="left:263.00px;top:242.76px;width:82.30px"></div>
<div class="cell" style="left:356.00px;top:242.76px;width:209.80px"></div>
<div class="cell" style="left:570.25px;top:242.76px;width:96.05px"></div>
<div class="cell" style="left:670.25px;top:242.76px;width:24.55px"></div>
<div class="cell" style="left:699.40px;top:242.76px;width:80.90px"></div>
<div class="cb" style="left:193.2px;top:244.56px"></div>
<div class="a" style="left:204.3px;top:253.26px;width:1px;height:1.2px;background:#a08060"></div>
<div class="cell" style="left:206.00px;top:257.84px;width:10.55px"></div>
<div class="cell" style="left:220.40px;top:257.84px;width:10.40px"></div>
<div class="cell" style="left:234.75px;top:257.84px;width:10.10px"></div>
<div class="cell" style="left:249.00px;top:257.84px;width:10.30px"></div>
<div class="cell" style="left:263.00px;top:257.84px;width:82.30px"></div>
<div class="cell" style="left:356.00px;top:257.84px;width:209.80px"></div>
<div class="cell" style="left:570.25px;top:257.84px;width:96.05px"></div>
<div class="cell" style="left:670.25px;top:257.84px;width:24.55px"></div>
<div class="cell" style="left:699.40px;top:257.84px;width:80.90px"></div>
<div class="cb" style="left:193.2px;top:259.64px"></div>
<div class="a" style="left:204.3px;top:268.34px;width:1px;height:1.2px;background:#a08060"></div>
<div class="cell" style="left:206.00px;top:272.91px;width:10.55px"></div>
<div class="cell" style="left:220.40px;top:272.91px;width:10.40px"></div>
<div class="cell" style="left:234.75px;top:272.91px;width:10.10px"></div>
<div class="cell" style="left:249.00px;top:272.91px;width:10.30px"></div>
<div class="cell" style="left:263.00px;top:272.91px;width:82.30px"></div>
<div class="cell" style="left:356.00px;top:272.91px;width:209.80px"></div>
<div class="cell" style="left:570.25px;top:272.91px;width:96.05px"></div>
<div class="cell" style="left:670.25px;top:272.91px;width:24.55px"></div>
<div class="cell" style="left:699.40px;top:272.91px;width:80.90px"></div>
<div class="cb" style="left:193.2px;top:274.71px"></div>
<div class="a" style="left:204.3px;top:283.41px;width:1px;height:1.2px;background:#a08060"></div>
<div class="cell" style="left:206.00px;top:287.99px;width:10.55px"></div>
<div class="cell" style="left:220.40px;top:287.99px;width:10.40px"></div>
<div class="cell" style="left:234.75px;top:287.99px;width:10.10px"></div>
<div class="cell" style="left:249.00px;top:287.99px;width:10.30px"></div>
<div class="cell" style="left:263.00px;top:287.99px;width:82.30px"></div>
<div class="cell" style="left:356.00px;top:287.99px;width:209.80px"></div>
<div class="cell" style="left:570.25px;top:287.99px;width:96.05px"></div>
<div class="cell" style="left:670.25px;top:287.99px;width:24.55px"></div>
<div class="cell" style="left:699.40px;top:287.99px;width:80.90px"></div>
<div class="cb" style="left:193.2px;top:289.79px"></div>
<div class="a" style="left:204.3px;top:298.49px;width:1px;height:1.2px;background:#a08060"></div>
<div class="cell" style="left:206.00px;top:303.06px;width:10.55px"></div>
<div class="cell" style="left:220.40px;top:303.06px;width:10.40px"></div>
<div class="cell" style="left:234.75px;top:303.06px;width:10.10px"></div>
<div class="cell" style="left:249.00px;top:303.06px;width:10.30px"></div>
<div class="cell" style="left:263.00px;top:303.06px;width:82.30px"></div>
<div class="cell" style="left:356.00px;top:303.06px;width:209.80px"></div>
<div class="cell" style="left:570.25px;top:303.06px;width:96.05px"></div>
<div class="cell" style="left:670.25px;top:303.06px;width:24.55px"></div>
<div class="cell" style="left:699.40px;top:303.06px;width:80.90px"></div>
<div class="cb" style="left:193.2px;top:304.86px"></div>
<div class="a" style="left:204.3px;top:313.56px;width:1px;height:1.2px;background:#a08060"></div>
<div class="cell" style="left:206.00px;top:318.14px;width:10.55px"></div>
<div class="cell" style="left:220.40px;top:318.14px;width:10.40px"></div>
<div class="cell" style="left:234.75px;top:318.14px;width:10.10px"></div>
<div class="cell" style="left:249.00px;top:318.14px;width:10.30px"></div>
<div class="cell" style="left:263.00px;top:318.14px;width:82.30px"></div>
<div class="cell" style="left:356.00px;top:318.14px;width:209.80px"></div>
<div class="cell" style="left:570.25px;top:318.14px;width:96.05px"></div>
<div class="cell" style="left:670.25px;top:318.14px;width:24.55px"></div>
<div class="cell" style="left:699.40px;top:318.14px;width:80.90px"></div>
<div class="cb" style="left:193.2px;top:319.94px"></div>
<div class="a" style="left:204.3px;top:328.64px;width:1px;height:1.2px;background:#a08060"></div>
<div class="cell" style="left:206.00px;top:333.22px;width:10.55px"></div>
<div class="cell" style="left:220.40px;top:333.22px;width:10.40px"></div>
<div class="cell" style="left:234.75px;top:333.22px;width:10.10px"></div>
<div class="cell" style="left:249.00px;top:333.22px;width:10.30px"></div>
<div class="cell" style="left:263.00px;top:333.22px;width:82.30px"></div>
<div class="cell" style="left:356.00px;top:333.22px;width:209.80px"></div>
<div class="cell" style="left:570.25px;top:333.22px;width:96.05px"></div>
<div class="cell" style="left:670.25px;top:333.22px;width:24.55px"></div>
<div class="cell" style="left:699.40px;top:333.22px;width:80.90px"></div>
<div class="cb" style="left:193.2px;top:335.02px"></div>
<div class="a" style="left:204.3px;top:343.72px;width:1px;height:1.2px;background:#a08060"></div>
<div class="cell" style="left:206.00px;top:348.29px;width:10.55px"></div>
<div class="cell" style="left:220.40px;top:348.29px;width:10.40px"></div>
<div class="cell" style="left:234.75px;top:348.29px;width:10.10px"></div>
<div class="cell" style="left:249.00px;top:348.29px;width:10.30px"></div>
<div class="cell" style="left:263.00px;top:348.29px;width:82.30px"></div>
<div class="cell" style="left:356.00px;top:348.29px;width:209.80px"></div>
<div class="cell" style="left:570.25px;top:348.29px;width:96.05px"></div>
<div class="cell" style="left:670.25px;top:348.29px;width:24.55px"></div>
<div class="cell" style="left:699.40px;top:348.29px;width:80.90px"></div>
<div class="cb" style="left:193.2px;top:350.09px"></div>
<div class="a" style="left:204.3px;top:358.79px;width:1px;height:1.2px;background:#a08060"></div>
<div class="cell" style="left:206.00px;top:363.37px;width:10.55px"></div>
<div class="cell" style="left:220.40px;top:363.37px;width:10.40px"></div>
<div class="cell" style="left:234.75px;top:363.37px;width:10.10px"></div>
<div class="cell" style="left:249.00px;top:363.37px;width:10.30px"></div>
<div class="cell" style="left:263.00px;top:363.37px;width:82.30px"></div>
<div class="cell" style="left:356.00px;top:363.37px;width:209.80px"></div>
<div class="cell" style="left:570.25px;top:363.37px;width:96.05px"></div>
<div class="cell" style="left:670.25px;top:363.37px;width:24.55px"></div>
<div class="cell" style="left:699.40px;top:363.37px;width:80.90px"></div>
<div class="cb" style="left:193.2px;top:365.17px"></div>
<div class="a" style="left:204.3px;top:373.87px;width:1px;height:1.2px;background:#a08060"></div>
<div class="cell" style="left:206.00px;top:378.44px;width:10.55px"></div>
<div class="cell" style="left:220.40px;top:378.44px;width:10.40px"></div>
<div class="cell" style="left:234.75px;top:378.44px;width:10.10px"></div>
<div class="cell" style="left:249.00px;top:378.44px;width:10.30px"></div>
<div class="cell" style="left:263.00px;top:378.44px;width:82.30px"></div>
<div class="cell" style="left:356.00px;top:378.44px;width:209.80px"></div>
<div class="cell" style="left:570.25px;top:378.44px;width:96.05px"></div>
<div class="cell" style="left:670.25px;top:378.44px;width:24.55px"></div>
<div class="cell" style="left:699.40px;top:378.44px;width:80.90px"></div>
<div class="cb" style="left:193.2px;top:380.24px"></div>
<div class="a" style="left:204.3px;top:388.94px;width:1px;height:1.2px;background:#a08060"></div>
<div class="cell" style="left:206.00px;top:393.52px;width:10.55px"></div>
<div class="cell" style="left:220.40px;top:393.52px;width:10.40px"></div>
<div class="cell" style="left:234.75px;top:393.52px;width:10.10px"></div>
<div class="cell" style="left:249.00px;top:393.52px;width:10.30px"></div>
<div class="cell" style="left:263.00px;top:393.52px;width:82.30px"></div>
<div class="cell" style="left:356.00px;top:393.52px;width:209.80px"></div>
<div class="cell" style="left:570.25px;top:393.52px;width:96.05px"></div>
<div class="cell" style="left:670.25px;top:393.52px;width:24.55px"></div>
<div class="cell" style="left:699.40px;top:393.52px;width:80.90px"></div>
<div class="cb" style="left:193.2px;top:395.32px"></div>
<div class="a" style="left:204.3px;top:404.02px;width:1px;height:1.2px;background:#a08060"></div>
<div class="cell" style="left:206.00px;top:408.60px;width:10.55px"></div>
<div class="cell" style="left:220.40px;top:408.60px;width:10.40px"></div>
<div class="cell" style="left:234.75px;top:408.60px;width:10.10px"></div>
<div class="cell" style="left:249.00px;top:408.60px;width:10.30px"></div>
<div class="cell" style="left:263.00px;top:408.60px;width:82.30px"></div>
<div class="cell" style="left:356.00px;top:408.60px;width:209.80px"></div>
<div class="cell" style="left:570.25px;top:408.60px;width:96.05px"></div>
<div class="cell" style="left:670.25px;top:408.60px;width:24.55px"></div>
<div class="cell" style="left:699.40px;top:408.60px;width:80.90px"></div>
<div class="cb" style="left:193.2px;top:410.40px"></div>
<div class="a" style="left:204.3px;top:419.10px;width:1px;height:1.2px;background:#a08060"></div>
<div class="cell" style="left:206.00px;top:423.67px;width:10.55px"></div>
<div class="cell" style="left:220.40px;top:423.67px;width:10.40px"></div>
<div class="cell" style="left:234.75px;top:423.67px;width:10.10px"></div>
<div class="cell" style="left:249.00px;top:423.67px;width:10.30px"></div>
<div class="cell" style="left:263.00px;top:423.67px;width:82.30px"></div>
<div class="cell" style="left:356.00px;top:423.67px;width:209.80px"></div>
<div class="cell" style="left:570.25px;top:423.67px;width:96.05px"></div>
<div class="cell" style="left:670.25px;top:423.67px;width:24.55px"></div>
<div class="cell" style="left:699.40px;top:423.67px;width:80.90px"></div>
<div class="cb" style="left:193.2px;top:425.47px"></div>
<div class="a" style="left:204.3px;top:434.17px;width:1px;height:1.2px;background:#a08060"></div>
<div class="cell" style="left:206.00px;top:438.75px;width:10.55px"></div>
<div class="cell" style="left:220.40px;top:438.75px;width:10.40px"></div>
<div class="cell" style="left:234.75px;top:438.75px;width:10.10px"></div>
<div class="cell" style="left:249.00px;top:438.75px;width:10.30px"></div>
<div class="cell" style="left:263.00px;top:438.75px;width:82.30px"></div>
<div class="cell" style="left:356.00px;top:438.75px;width:209.80px"></div>
<div class="cell" style="left:570.25px;top:438.75px;width:96.05px"></div>
<div class="cell" style="left:670.25px;top:438.75px;width:24.55px"></div>
<div class="cell" style="left:699.40px;top:438.75px;width:80.90px"></div>
<div class="cb" style="left:193.2px;top:440.55px"></div>
<div class="a" style="left:204.3px;top:449.25px;width:1px;height:1.2px;background:#a08060"></div>
<span class="hd" style="left:209.8px">S</span>
<span class="hd" style="left:224px">T</span>
<span class="hd" style="left:238.4px">D</span>
<span class="hd" style="left:252.6px">O</span>
<span class="hd" style="left:263.5px">Naše číslo</span>
<span class="hd" style="left:355.3px">Předmět</span>
<span class="hd" style="left:569.8px">Strana</span>
<span class="hd" style="left:669.8px">Rok</span>
<span class="hd" style="left:699.8px">Typ smlouvy</span>
<span class="ct" style="left:266px;top:95.50px;letter-spacing:-0.377px">122101</span>
<span class="ct" style="left:358.5px;top:95.50px;letter-spacing:-0.225px">Pronájem knaceláře</span>
<span class="ct" style="left:572.3px;top:95.50px;letter-spacing:-0.052px">ADVANTA</span>
<span class="ct" style="left:672.3px;top:95.50px;letter-spacing:-0.270px">2010</span>
<span class="ct" style="left:701.9px;top:95.50px;letter-spacing:-0.309px">Nájemní a podnájemn</span>
<span class="ct" style="left:266px;top:110.58px;letter-spacing:-0.250px">111111111</span>
<span class="ct" style="left:358.5px;top:110.58px;letter-spacing:-0.205px">školní podnik</span>
<span class="ct" style="left:572.3px;top:110.58px;letter-spacing:-0.460px">A - CONNECT UNE SPOL.</span>
<span class="ct" style="left:672.3px;top:110.58px;letter-spacing:-0.270px">2010</span>
<span class="ct" style="left:701.9px;top:110.58px;letter-spacing:-0.309px">Nájemní a podnájemn</span>
<span class="ct" style="left:266px;top:125.65px;letter-spacing:-0.304px">10N1200001</span>
<span class="ct" style="left:358.5px;top:125.65px;letter-spacing:-0.257px">Pronájem</span>
<span class="ct" style="left:572.3px;top:125.65px">AGS</span>
<span class="ct" style="left:672.3px;top:125.65px;letter-spacing:-0.270px">2010</span>
<span class="ct" style="left:701.9px;top:125.65px;letter-spacing:-0.309px">Nájemní a podnájemn</span>
<span class="ct" style="left:225.6px;top:125.35px;color:#e01020;font-weight:bold">!</span>
<div class="a" style="left:192.6px;top:90.6px;width:13.4px;height:15.8px;border:1px dotted #333;border-left-color:transparent;border-right-color:transparent;box-sizing:border-box;background:#cfe6ff"></div><div class="cb w" style="left:193.2px;top:93.8px"></div>
<svg class="a" style="left:193px;top:93px" width="12" height="12" viewBox="193 93 12 12"><path d="M195.2 98.2 L197.6 101 L201.6 95.6" fill="none" stroke="#161e36" stroke-width="2.1"/></svg>
<div class="a" style="left:350px;top:75px;width:2px;height:399px;background:#a6a8ab"></div><div class="a" style="left:352px;top:75px;width:1px;height:399px;background:#fafafa"></div>
<div class="a" style="left:788px;top:64px;width:2px;height:414px;background:#a6a8ab"></div><div class="a" style="left:790px;top:64px;width:1px;height:414px;background:#fafafa"></div>
<div class="a" style="left:175.5px;top:104px;width:9.5px;height:339px;background:#d2d2d2;border-left:1px solid #f4f4f4;border-right:1px solid #f0f0f0"></div>
<div class="a" style="left:174.2px;top:91.3px;width:12.3px;height:11.6px;background:#e0e0e0;border:1px solid #a4b4ce;border-radius:6px 6px 1px 1px;box-sizing:border-box"></div>
<div class="a" style="left:174.2px;top:443.3px;width:12.3px;height:11.8px;background:#e0e0e0;border:1px solid #a4b4ce;border-radius:1px 1px 6px 6px;box-sizing:border-box"></div>
<svg class="a" style="left:174.5px;top:92px" width="12" height="11" viewBox="0 0 12 11"><path d="M3.2 7 L8.6 7 L5.9 4 Z" fill="#4a628c"/></svg>
<svg class="a" style="left:174.5px;top:443.5px" width="12" height="12" viewBox="0 0 12 12"><path d="M3.2 4.5 L8.6 4.5 L5.9 7.5 Z" fill="#4a628c"/></svg>
<svg class="a" style="left:175px;top:215px" width="11" height="96" viewBox="175 215 11 96"><circle cx="182.4" cy="218.6" r="0.75" fill="#fbfbfb"/><circle cx="179" cy="221.7" r="0.75" fill="#fbfbfb"/><circle cx="182.4" cy="224.8" r="0.75" fill="#fbfbfb"/><circle cx="179" cy="228.0" r="0.75" fill="#fbfbfb"/><circle cx="182.4" cy="231.1" r="0.75" fill="#fbfbfb"/><circle cx="179" cy="234.2" r="0.75" fill="#fbfbfb"/><circle cx="182.4" cy="237.3" r="0.75" fill="#fbfbfb"/><circle cx="179" cy="240.4" r="0.75" fill="#fbfbfb"/><circle cx="182.4" cy="243.6" r="0.75" fill="#fbfbfb"/><circle cx="179" cy="246.7" r="0.75" fill="#fbfbfb"/><circle cx="182.4" cy="249.8" r="0.75" fill="#fbfbfb"/><circle cx="179" cy="252.9" r="0.75" fill="#fbfbfb"/><circle cx="182.4" cy="256.0" r="0.75" fill="#fbfbfb"/><circle cx="179" cy="259.2" r="0.75" fill="#fbfbfb"/><circle cx="182.4" cy="262.3" r="0.75" fill="#fbfbfb"/><circle cx="179" cy="265.4" r="0.75" fill="#fbfbfb"/><circle cx="182.4" cy="268.5" r="0.75" fill="#fbfbfb"/><circle cx="179" cy="271.6" r="0.75" fill="#fbfbfb"/><circle cx="182.4" cy="274.8" r="0.75" fill="#fbfbfb"/><circle cx="179" cy="277.9" r="0.75" fill="#fbfbfb"/><circle cx="182.4" cy="281.0" r="0.75" fill="#fbfbfb"/><circle cx="179" cy="284.1" r="0.75" fill="#fbfbfb"/><circle cx="182.4" cy="287.2" r="0.75" fill="#fbfbfb"/><circle cx="179" cy="290.4" r="0.75" fill="#fbfbfb"/><circle cx="182.4" cy="293.5" r="0.75" fill="#fbfbfb"/><circle cx="179" cy="296.6" r="0.75" fill="#fbfbfb"/><circle cx="182.4" cy="299.7" r="0.75" fill="#fbfbfb"/><circle cx="179" cy="302.8" r="0.75" fill="#fbfbfb"/><circle cx="182.4" cy="306.0" r="0.75" fill="#fbfbfb"/></svg>
<div class="a" style="left:49.5px;top:474.5px;width:118.5px;height:64px;border-left:1.2px solid #7089b0;border-top:1px solid #7089b0;border-right:1px solid #fafafa;border-bottom:1px solid #fafafa;background:#e1e1e1"></div>
<div class="btn" style="left:61.7px;top:492.6px;width:14.600000000000001px">+</div>
<div class="btn" style="left:87.3px;top:492.6px;width:15.2px">X</div>
<div class="btn" style="left:113.2px;top:492.6px;width:15.5px">&lt;</div>
<div class="btn" style="left:139.9px;top:492.6px;width:15.3px">&gt;</div>
<div class="btn" style="left:61.7px;top:519.3px;width:93.7px">Text</div>
<div class="btn" style="left:199.5px;top:492.3px;width:82px">+ Kopie</div>
<div class="btn" style="left:292px;top:492.3px;width:60.3px">Historie</div>
<div class="btn" style="left:199.5px;top:519.3px;width:82.05px;color:#8292ae">Zrušit odkaz</div>
<div class="btn" style="left:292px;top:519.3px;width:82.05px">Přidat odkaz</div>
<div class="btn" style="left:385px;top:519.3px;width:80.30px">Změna stavu</div>
<div class="btn" style="left:477.5px;top:519.3px;width:81.55px">Vyjmutí z archivu</div>
<div class="btn" style="left:571.25px;top:519.3px;width:80.30px">Provázané smlouvy</div>
<div class="btn" style="left:662.5px;top:519.3px;width:81.55px">Hrom.zmena</div>
<div class="a" style="left:471px;top:510.5px;width:90px;height:26.6px;border:3px solid #dc1030;border-radius:2.5px"></div>
<div class="a" style="left:356px;top:494.2px;width:436.5px;height:11.8px;background:#93a4bf;"></div>
<div class="a" style="left:356px;top:494.2px;width:10.6px;height:11.8px;background:#dcdcdc;border:1px solid #9fb0cc;box-sizing:border-box;border-radius:4px 0 0 4px"></div>
<div class="a" style="left:781.5px;top:494.2px;width:11px;height:11.8px;background:#dcdcdc;border:1px solid #9fb0cc;box-sizing:border-box;border-radius:0 4px 4px 0"></div>
<div class="a" style="left:367px;top:494.2px;width:58px;height:11.8px;background:#d6d6d6;border:1px solid #f6f6f6;border-right-color:#a8b4c8;border-bottom-color:#a8b4c8;box-sizing:border-box"></div>
<svg class="a" style="left:356px;top:494.5px" width="10" height="11" viewBox="0 0 10 11"><path d="M6.8 2.8 L6.8 8.4 L3.6 5.6 Z" fill="#4a628c"/></svg>
<svg class="a" style="left:781.5px;top:494.5px" width="11" height="11" viewBox="0 0 11 11"><path d="M4.2 2.8 L4.2 8.4 L7.4 5.6 Z" fill="#4a628c"/></svg>
<svg class="a" style="left:385px;top:495px" width="26" height="10" viewBox="385 495 26 10"><circle cx="386.9" cy="502.2" r="0.95" fill="#fbfbfb"/><circle cx="393.4" cy="502.2" r="0.95" fill="#fbfbfb"/><circle cx="399.9" cy="502.2" r="0.95" fill="#fbfbfb"/><circle cx="406.4" cy="502.2" r="0.95" fill="#fbfbfb"/><circle cx="390.1" cy="498.3" r="0.95" fill="#fbfbfb"/><circle cx="396.6" cy="498.3" r="0.95" fill="#fbfbfb"/><circle cx="403.1" cy="498.3" r="0.95" fill="#fbfbfb"/></svg>
<div class="a" style="left:0;top:40px;width:2px;height:505px;background:#e2e2e2"></div><div class="a" style="left:2px;top:57.7px;width:1.4px;height:487px;background:#f8f8f8"></div>
<div class="a" style="left:798px;top:41px;width:1px;height:504px;background:#f2f2f6"></div><div class="a" style="left:799px;top:42px;width:1px;height:503px;background:#141414"></div>
<div class="a" style="left:0;top:543.5px;width:797.5px;height:1.2px;background:#f8f8f8"></div>
<div id="status" class="a"><div class="a" style="left:0;top:0;width:800px;height:1px;background:#1c1c1c"></div>
<div class="a" style="left:3px;top:1px;width:795px;height:29.5px;border:1px solid #93a3bd;border-radius:5px;box-sizing:border-box;border-top-color:#2c3a52"></div>
<div class="a" style="left:5px;top:15px;width:787px;height:1px;background:#7c7c7c"></div><div class="a" style="left:5px;top:16px;width:787px;height:1px;background:#2e3c56"></div>
<span class="t" style="left:8px;top:5.2px;font-size:9.6px;color:#f4f4f4">Výběr smlouvy pro přesun nebo archiv</span>
<span class="t" style="left:8px;top:19.2px;font-size:9.6px;color:#f4f4f4">Záznam: 1/3</span>
<span class="t" style="left:182.5px;top:19.2px;font-size:9.6px;color:#f4f4f4">...</span>
<span class="t" style="left:327px;top:19.2px;font-size:9.6px;color:#f4f4f4">&lt;OSC&gt;</span>
<div class="a" style="left:109px;top:17.5px;width:1px;height:11.5px;background:#a4b0c4"></div><div class="a" style="left:110px;top:17.5px;width:1px;height:11.5px;background:#36435c"></div>
<div class="a" style="left:133px;top:17.5px;width:1px;height:11.5px;background:#a4b0c4"></div><div class="a" style="left:134px;top:17.5px;width:1px;height:11.5px;background:#36435c"></div>
<div class="a" style="left:196px;top:17.5px;width:1px;height:11.5px;background:#a4b0c4"></div><div class="a" style="left:197px;top:17.5px;width:1px;height:11.5px;background:#36435c"></div>
<div class="a" style="left:277px;top:17.5px;width:1px;height:11.5px;background:#a4b0c4"></div><div class="a" style="left:278px;top:17.5px;width:1px;height:11.5px;background:#36435c"></div>
<div class="a" style="left:319px;top:17.5px;width:1px;height:11.5px;background:#a4b0c4"></div><div class="a" style="left:320px;top:17.5px;width:1px;height:11.5px;background:#36435c"></div>
<div class="a" style="left:785.3px;top:2.5px;width:1px;height:13px;background:#b8c0cc"></div><div class="a" style="left:786.3px;top:2.5px;width:1px;height:13px;background:#36435c"></div>
</div>
</body></html>
